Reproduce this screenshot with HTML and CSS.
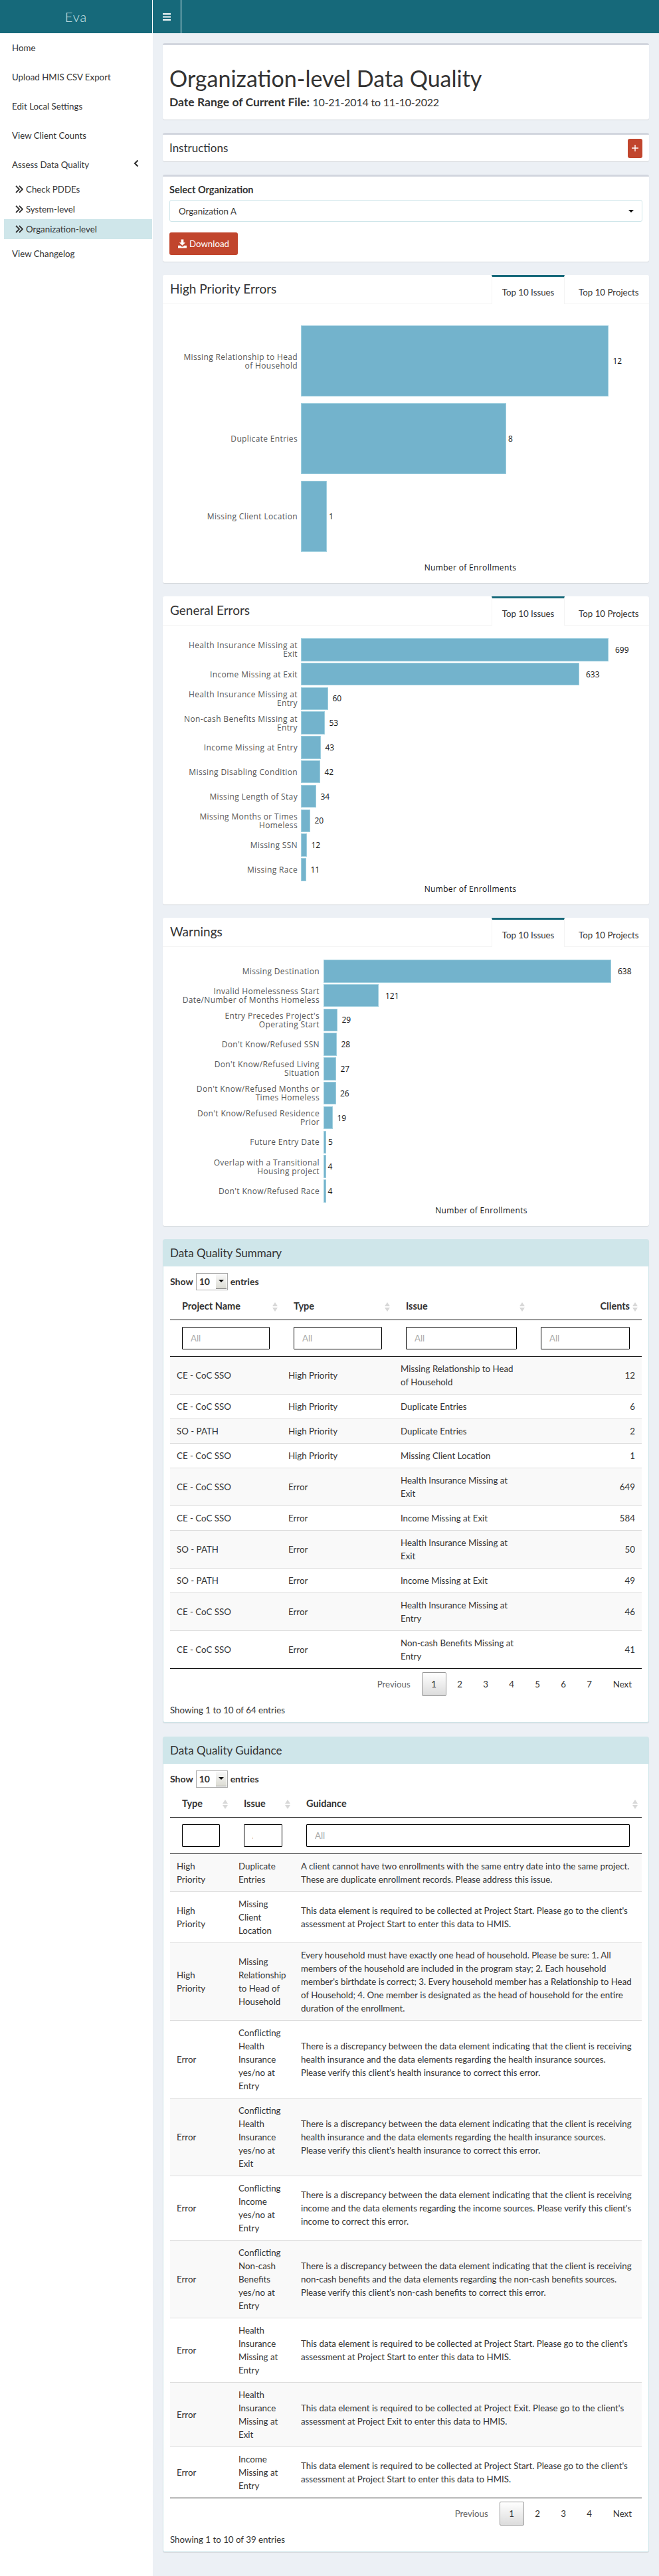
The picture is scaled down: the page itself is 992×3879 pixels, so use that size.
FILE: index.html
```html
<!DOCTYPE html>
<html lang="en">
<head>
  <meta charset="UTF-8" />
  <meta name="viewport" content="width=device-width, initial-scale=1.0" />
  <title>Eva</title>
  <link rel="stylesheet" href="styles.css">
</head>
<body>
  <header class="navbar">
    <div class="logo">Eva</div>
    <div class="toggle">
      <svg width="12" height="11" viewBox="0 0 12 11"><path d="M0 0h12v2H0zM0 4.500h12v2H0zM0 9h12v2H0z" fill="#fff"/></svg>
    </div>
  </header>

  <div class="wrapper">
    <nav class="sidebar">
      <ul class="menu">
        <li>Home</li>
        <li>Upload HMIS CSV Export</li>
        <li>Edit Local Settings</li>
        <li>View Client Counts</li>
        <li class="has-sub">Assess Data Quality
          <svg class="chev" width="8" height="12" viewBox="0 0 8 12"><path d="M6.500 1.500L2 6l4.500 4.500" fill="none" stroke="#333" stroke-width="2.200"/></svg>
        </li>
      </ul>
      <ul class="submenu">
        <li><svg width="12" height="12" viewBox="0 0 12 12"><path d="M1 1l5 5-5 5M6 1l5 5-5 5" fill="none" stroke="#333" stroke-width="1.800"/></svg>Check PDDEs</li>
        <li><svg width="12" height="12" viewBox="0 0 12 12"><path d="M1 1l5 5-5 5M6 1l5 5-5 5" fill="none" stroke="#333" stroke-width="1.800"/></svg>System-level</li>
        <li class="active"><svg width="12" height="12" viewBox="0 0 12 12"><path d="M1 1l5 5-5 5M6 1l5 5-5 5" fill="none" stroke="#333" stroke-width="1.800"/></svg>Organization-level</li>
      </ul>
      <ul class="menu">
        <li>View Changelog</li>
      </ul>
    </nav>

    <main class="content">
      <section class="box title-box">
        <h1>Organization-level Data Quality</h1>
        <h4><strong>Date Range of Current File:</strong> <span class="dates">10-21-2014 to 11-10-2022</span></h4>
      </section>

      <section class="box instructions">
        <h3>Instructions</h3>
        <button class="btn-plus">
          <svg width="10" height="10" viewBox="0 0 10 10"><path d="M5 0v10M0 5h10" stroke="#fff" stroke-width="1.400"/></svg>
        </button>
      </section>

      <section class="box org-box">
        <label class="org-label">Select Organization</label>
        <div class="org-select">Organization A<span class="caret"></span></div>
        <button class="btn-download">
          <svg width="14" height="14" viewBox="0 0 14 14"><path d="M5 0h4v5h3L7 10 2 5h3z" fill="#fff"/><path d="M0 10h4l2 2h2l2-2h4v4H0z" fill="#fff"/></svg>
          Download
        </button>
      </section>

      <section class="tab-box">
        <div class="tab-head">
          <h3>High Priority Errors</h3>
          <div class="tab active">Top 10 Issues</div>
          <div class="tab">Top 10 Projects</div>
        </div>
        <div class="chart tall">
          <div class="row"><div class="label">Missing Relationship to Head<br>of Household</div><div class="bar" style="width:463px"></div><div class="val d2">12</div></div>
          <div class="row"><div class="label">Duplicate Entries</div><div class="bar" style="width:309px"></div><div class="val d1">8</div></div>
          <div class="row"><div class="label">Missing Client Location</div><div class="bar" style="width:39px"></div><div class="val d1">1</div></div>
          <div class="axis-title">Number of Enrollments</div>
        </div>
      </section>

      <section class="tab-box">
        <div class="tab-head">
          <h3>General Errors</h3>
          <div class="tab active">Top 10 Issues</div>
          <div class="tab">Top 10 Projects</div>
        </div>
        <div class="chart">
          <div class="row"><div class="label">Health Insurance Missing at<br>Exit</div><div class="bar" style="width:463px"></div><div class="val d3">699</div></div>
          <div class="row"><div class="label">Income Missing at Exit</div><div class="bar" style="width:419px"></div><div class="val d3">633</div></div>
          <div class="row"><div class="label">Health Insurance Missing at<br>Entry</div><div class="bar" style="width:41px"></div><div class="val d2">60</div></div>
          <div class="row"><div class="label">Non-cash Benefits Missing at<br>Entry</div><div class="bar" style="width:36px"></div><div class="val d2">53</div></div>
          <div class="row"><div class="label">Income Missing at Entry</div><div class="bar" style="width:30px"></div><div class="val d2">43</div></div>
          <div class="row"><div class="label">Missing Disabling Condition</div><div class="bar" style="width:29px"></div><div class="val d2">42</div></div>
          <div class="row"><div class="label">Missing Length of Stay</div><div class="bar" style="width:23px"></div><div class="val d2">34</div></div>
          <div class="row"><div class="label">Missing Months or Times<br>Homeless</div><div class="bar" style="width:14px"></div><div class="val d2">20</div></div>
          <div class="row"><div class="label">Missing SSN</div><div class="bar" style="width:9px"></div><div class="val d2">12</div></div>
          <div class="row"><div class="label">Missing Race</div><div class="bar" style="width:8px"></div><div class="val d2">11</div></div>
          <div class="axis-title">Number of Enrollments</div>
        </div>
      </section>

      <section class="tab-box">
        <div class="tab-head">
          <h3>Warnings</h3>
          <div class="tab active">Top 10 Issues</div>
          <div class="tab">Top 10 Projects</div>
        </div>
        <div class="chart wide">
          <div class="row"><div class="label">Missing Destination</div><div class="bar" style="width:433px"></div><div class="val d3">638</div></div>
          <div class="row"><div class="label">Invalid Homelessness Start<br>Date/Number of Months Homeless</div><div class="bar" style="width:83px"></div><div class="val d3">121</div></div>
          <div class="row"><div class="label">Entry Precedes Project's<br>Operating Start</div><div class="bar" style="width:21px"></div><div class="val d2">29</div></div>
          <div class="row"><div class="label">Don't Know/Refused SSN</div><div class="bar" style="width:20px"></div><div class="val d2">28</div></div>
          <div class="row"><div class="label">Don't Know/Refused Living<br>Situation</div><div class="bar" style="width:19px"></div><div class="val d2">27</div></div>
          <div class="row"><div class="label">Don't Know/Refused Months or<br>Times Homeless</div><div class="bar" style="width:18.500px"></div><div class="val d2">26</div></div>
          <div class="row"><div class="label">Don't Know/Refused Residence<br>Prior</div><div class="bar" style="width:14px"></div><div class="val d2">19</div></div>
          <div class="row"><div class="label">Future Entry Date</div><div class="bar" style="width:4px"></div><div class="val d1">5</div></div>
          <div class="row"><div class="label">Overlap with a Transitional<br>Housing project</div><div class="bar" style="width:3.500px"></div><div class="val d1">4</div></div>
          <div class="row"><div class="label">Don't Know/Refused Race</div><div class="bar" style="width:3.500px"></div><div class="val d1">4</div></div>
          <div class="axis-title">Number of Enrollments</div>
        </div>
      </section>

      <section class="solid-box">
        <h3 class="solid-head">Data Quality Summary</h3>
        <div class="solid-body">
          <div class="length">Show <span class="len-select">10<span class="len-btn"></span></span> entries</div>
          <table class="dt summary">
            <thead>
              <tr>
                <th class="c-project">Project Name<span class="sort"></span></th>
                <th class="c-type">Type<span class="sort"></span></th>
                <th class="c-issue">Issue<span class="sort"></span></th>
                <th class="c-clients num">Clients<span class="sort"></span></th>
              </tr>
              <tr class="filters">
                <td><input placeholder="All"></td>
                <td><input placeholder="All"></td>
                <td><input placeholder="All"></td>
                <td><input placeholder="All"></td>
              </tr>
            </thead>
            <tbody>
              <tr><td>CE - CoC SSO</td><td>High Priority</td><td>Missing Relationship to Head<br>of Household</td><td class="num">12</td></tr>
              <tr><td>CE - CoC SSO</td><td>High Priority</td><td>Duplicate Entries</td><td class="num">6</td></tr>
              <tr><td>SO - PATH</td><td>High Priority</td><td>Duplicate Entries</td><td class="num">2</td></tr>
              <tr><td>CE - CoC SSO</td><td>High Priority</td><td>Missing Client Location</td><td class="num">1</td></tr>
              <tr><td>CE - CoC SSO</td><td>Error</td><td>Health Insurance Missing at<br>Exit</td><td class="num">649</td></tr>
              <tr><td>CE - CoC SSO</td><td>Error</td><td>Income Missing at Exit</td><td class="num">584</td></tr>
              <tr><td>SO - PATH</td><td>Error</td><td>Health Insurance Missing at<br>Exit</td><td class="num">50</td></tr>
              <tr><td>SO - PATH</td><td>Error</td><td>Income Missing at Exit</td><td class="num">49</td></tr>
              <tr><td>CE - CoC SSO</td><td>Error</td><td>Health Insurance Missing at<br>Entry</td><td class="num">46</td></tr>
              <tr><td>CE - CoC SSO</td><td>Error</td><td>Non-cash Benefits Missing at<br>Entry</td><td class="num">41</td></tr>
            </tbody>
          </table>
          <div class="pager">
            <span class="page off">Previous</span>
            <span class="page digit current">1</span>
            <span class="page digit">2</span>
            <span class="page digit">3</span>
            <span class="page digit">4</span>
            <span class="page digit">5</span>
            <span class="page digit">6</span>
            <span class="page digit">7</span>
            <span class="page">Next</span>
          </div>
          <div class="info">Showing 1 to 10 of 64 entries</div>
        </div>
      </section>

      <section class="solid-box">
        <h3 class="solid-head">Data Quality Guidance</h3>
        <div class="solid-body">
          <div class="length">Show <span class="len-select">10<span class="len-btn"></span></span> entries</div>
          <table class="dt guidance">
            <thead>
              <tr>
                <th class="g-type">Type<span class="sort"></span></th>
                <th class="g-issue">Issue<span class="sort"></span></th>
                <th class="g-text">Guidance<span class="sort"></span></th>
              </tr>
              <tr class="filters">
                <td><input class="clipped" placeholder="All"></td>
                <td><input class="clipped" placeholder="All"></td>
                <td><input placeholder="All"></td>
              </tr>
            </thead>
            <tbody>
              <tr><td>High<br>Priority</td><td>Duplicate<br>Entries</td><td>A client cannot have two enrollments with the same entry date into the same project.<br>These are duplicate enrollment records. Please address this issue.</td></tr>
              <tr><td>High<br>Priority</td><td>Missing<br>Client<br>Location</td><td>This data element is required to be collected at Project Start. Please go to the client's<br>assessment at Project Start to enter this data to HMIS.</td></tr>
              <tr><td>High<br>Priority</td><td>Missing<br>Relationship<br>to Head of<br>Household</td><td>Every household must have exactly one head of household. Please be sure: 1. All<br>members of the household are included in the program stay; 2. Each household<br>member's birthdate is correct; 3. Every household member has a Relationship to Head<br>of Household; 4. One member is designated as the head of household for the entire<br>duration of the enrollment.</td></tr>
              <tr><td>Error</td><td>Conflicting<br>Health<br>Insurance<br>yes/no at<br>Entry</td><td>There is a discrepancy between the data element indicating that the client is receiving<br>health insurance and the data elements regarding the health insurance sources.<br>Please verify this client's health insurance to correct this error.</td></tr>
              <tr><td>Error</td><td>Conflicting<br>Health<br>Insurance<br>yes/no at<br>Exit</td><td>There is a discrepancy between the data element indicating that the client is receiving<br>health insurance and the data elements regarding the health insurance sources.<br>Please verify this client's health insurance to correct this error.</td></tr>
              <tr><td>Error</td><td>Conflicting<br>Income<br>yes/no at<br>Entry</td><td>There is a discrepancy between the data element indicating that the client is receiving<br>income and the data elements regarding the income sources. Please verify this client's<br>income to correct this error.</td></tr>
              <tr><td>Error</td><td>Conflicting<br>Non-cash<br>Benefits<br>yes/no at<br>Entry</td><td>There is a discrepancy between the data element indicating that the client is receiving<br>non-cash benefits and the data elements regarding the non-cash benefits sources.<br>Please verify this client's non-cash benefits to correct this error.</td></tr>
              <tr><td>Error</td><td>Health<br>Insurance<br>Missing at<br>Entry</td><td>This data element is required to be collected at Project Start. Please go to the client's<br>assessment at Project Start to enter this data to HMIS.</td></tr>
              <tr><td>Error</td><td>Health<br>Insurance<br>Missing at<br>Exit</td><td>This data element is required to be collected at Project Exit. Please go to the client's<br>assessment at Project Exit to enter this data to HMIS.</td></tr>
              <tr><td>Error</td><td>Income<br>Missing at<br>Entry</td><td>This data element is required to be collected at Project Start. Please go to the client's<br>assessment at Project Start to enter this data to HMIS.</td></tr>
            </tbody>
          </table>
          <div class="pager">
            <span class="page off">Previous</span>
            <span class="page digit current">1</span>
            <span class="page digit">2</span>
            <span class="page digit">3</span>
            <span class="page digit">4</span>
            <span class="page">Next</span>
          </div>
          <div class="info">Showing 1 to 10 of 39 entries</div>
        </div>
      </section>
    </main>
  </div>
</body>
</html>
```

FILE: styles.css
```css
* {
  box-sizing: border-box;
}
body {
  margin: 0;
  font-family: "Lato", "Noto Sans", sans-serif;
  font-size: 13.300px;
  line-height: 20px;
  color: #333;
  background: #ecf0f5;
}
h1, h3, h4 {
  margin: 0;
  font-weight: 400;
}

/* Top bar */
.navbar {
  display: flex;
  height: 50px;
  background: #16697a;
}
.logo {
  width: 230px;
  border-right: 1px solid #fff;
  text-align: center;
  font-size: 20px;
  font-weight: 300;
  line-height: 50px;
  letter-spacing: 1px;
  color: #cfe6ea;
}
.toggle {
  display: flex;
  align-items: center;
  justify-content: center;
  width: 43px;
  border-right: 1px solid #fff;
}

/* Sidebar */
.wrapper {
  display: flex;
  min-height: 3829px;
}
.sidebar {
  flex: none;
  width: 230px;
  background: #fff;
}
.menu, .submenu {
  list-style: none;
  margin: 0;
  padding: 0;
}
.menu li {
  position: relative;
  padding: 12px 15px 12px 18px;
}
.chev {
  position: absolute;
  right: 21px;
  top: 14px;
}
.submenu {
  padding: 0 1px 0 6px;
}
.submenu li {
  display: flex;
  align-items: center;
  gap: 4px;
  height: 30px;
  padding-left: 17px;
}
.submenu li.active {
  background: #cfe6ea;
}

/* Content */
.content {
  flex: 1;
  min-width: 0;
  padding: 15px;
}
.box, .tab-box, .solid-box {
  margin-bottom: 20px;
  background: #fff;
  border-radius: 3px;
  box-shadow: 0 1px 1px rgba(0, 0, 0, 0.1);
}
.box {
  border-top: 3px solid #d2d6de;
}
.title-box {
  height: 115px;
  padding: 30px 10px 0;
}
.title-box h1 {
  font-size: 34px;
  line-height: 40px;
}
.title-box h4 {
  margin-top: 6px;
  font-size: 17.500px;
  line-height: 20px;
}
.dates {
  font-size: 16px;
  letter-spacing: -0.2px;
}
.instructions {
  display: flex;
  align-items: center;
  justify-content: space-between;
  height: 43px;
  padding: 0 10px;
}
.instructions h3 {
  font-size: 17px;
}
.btn-plus {
  display: flex;
  align-items: center;
  justify-content: center;
  width: 22px;
  height: 29px;
  padding: 0;
  border: 0;
  border-radius: 3px;
  background: #c1452d;
}
.org-box {
  height: 131px;
  padding: 10px;
}
.org-label {
  display: block;
  font-size: 14.500px;
  font-weight: 700;
}
.org-select {
  display: flex;
  align-items: center;
  justify-content: space-between;
  height: 33px;
  margin-top: 5px;
  padding: 0 12px 0 13px;
  border: 1px solid #cfe6ea;
  border-radius: 3px;
}
.caret {
  width: 0;
  height: 0;
  border-left: 4px solid transparent;
  border-right: 4px solid transparent;
  border-top: 4px solid #111;
}
.btn-download {
  display: flex;
  align-items: center;
  gap: 4px;
  width: 103px;
  height: 34px;
  margin-top: 16px;
  padding: 0 13px;
  border: 0;
  border-radius: 3px;
  background: #c1452d;
  color: #fff;
  font: inherit;
}

/* Tabbed chart boxes */
.tab-head {
  display: flex;
  height: 44px;
  border-bottom: 1px solid #f4f4f4;
}
.tab-head h3 {
  flex: 1;
  padding: 9px 11px 0;
  font-size: 19px;
  line-height: 24px;
}
.tab {
  flex: none;
  width: 127px;
  height: 44px;
  padding: 13px 0 0 21px;
  border-top: 3px solid transparent;
  white-space: nowrap;
}
.tab.active {
  width: 110px;
  padding: 13px 0 0;
  text-align: center;
  border-top-color: #16697a;
  border-left: 1px solid #f4f4f4;
  border-right: 1px solid #f4f4f4;
  background: #fff;
}
.chart {
  --label: 203px;
  display: flex;
  flex-direction: column;
  gap: 2.300px;
  height: 420px;
  padding-top: 19px;
  font-family: "Open Sans", sans-serif;
  font-size: 12px;
  line-height: 13px;
}
.chart.wide {
  --label: 236px;
}
.chart.tall {
  gap: 10px;
  padding-top: 32px;
}
.row {
  display: flex;
  align-items: center;
  height: 34.500px;
}
.tall .row {
  height: 107px;
}
.label {
  flex: none;
  width: var(--label);
  margin-right: 5px;
  text-align: right;
  letter-spacing: 0.35px;
  color: #555;
}
.wide .label {
  margin-right: 6px;
}
.bar {
  height: 100%;
  background: #73b3cc;
  border: 1px solid #9fcfdf;
}
.val {
  color: #111;
}
.val.d1 { margin-left: 3px; }
.val.d2 { margin-left: 6.500px; }
.val.d3 { margin-left: 10px; }
.axis-title {
  margin: 2px 14px 0 calc(var(--label) + 5px);
  text-align: center;
  line-height: 16px;
  letter-spacing: 0.35px;
  color: #111;
}
.tall .axis-title {
  margin-top: 6px;
}

/* Solid table boxes */
.solid-box {
  border: 1px solid #cfe6ea;
  margin-bottom: 21px;
}
.solid-head {
  height: 40px;
  padding: 9px 10px 0;
  font-size: 17px;
  line-height: 22px;
  background: #cfe6ea;
}
.solid-body {
  padding: 10px 10px 8px;
}
.length {
  display: flex;
  align-items: center;
  gap: 4px;
  height: 26px;
  font-size: 14px;
  font-weight: 700;
}
.len-select {
  display: flex;
  align-items: center;
  justify-content: space-between;
  width: 48px;
  height: 26px;
  padding: 0 1px 0 4px;
  border: 1px solid #aaa;
  font-weight: 700;
}
.len-btn {
  position: relative;
  width: 16px;
  height: 22px;
  background: linear-gradient(#f8f8f8, #dcdcd4);
  border-bottom: 1px solid #888;
}
.len-btn::after {
  content: "";
  position: absolute;
  left: 4px;
  top: 8px;
  border-left: 4px solid transparent;
  border-right: 4px solid transparent;
  border-top: 4px solid #111;
}
.dt {
  width: 100%;
  margin-top: 4px;
  table-layout: fixed;
  border-collapse: separate;
  border-spacing: 0;
}
.dt th {
  position: relative;
  padding: 10px 18px;
  text-align: left;
  font-size: 14.500px;
  font-weight: 700;
  border-bottom: 1px solid #111;
}
.dt th.num {
  text-align: right;
}
.sort {
  position: absolute;
  right: 5px;
  top: 14px;
  width: 9px;
  height: 14px;
}
.sort::before, .sort::after {
  content: "";
  position: absolute;
  left: 0;
  border-left: 4.500px solid transparent;
  border-right: 4.500px solid transparent;
}
.sort::before {
  top: 0;
  border-bottom: 6px solid #d8d8d8;
}
.sort::after {
  bottom: 0;
  border-top: 6px solid #d8d8d8;
}
.filters td {
  padding: 10px 18px;
  border-bottom: 1px solid #111;
}
.filters input {
  display: block;
  width: 100%;
  height: 34px;
  padding: 0 12px;
  border: 1px solid #000;
  border-radius: 1px;
  font: inherit;
}
.filters input::placeholder {
  color: #aaa;
}
.filters input.clipped {
  padding-right: 43px;
}
.c-project { width: 168px; }
.c-type { width: 169px; }
.c-issue { width: 203px; }
.c-clients { width: 170px; }
.g-type { width: 93px; }
.g-issue { width: 94px; }
.dt tbody td {
  padding: 8px 10px;
  white-space: nowrap;
  border-bottom: 1px solid #ddd;
}
.dt tbody td.num {
  text-align: right;
}
.dt tbody tr:nth-child(odd) {
  background: #f9f9f9;
}
.dt tbody tr:last-child td {
  border-bottom: 1px solid #111;
}
.pager {
  display: flex;
  justify-content: flex-end;
  gap: 2px;
  margin-top: 5px;
}
.page {
  padding: 7px 14px;
  border: 1px solid transparent;
  border-radius: 2px;
}
.page.digit {
  width: 37px;
  padding: 7px 0;
  text-align: center;
}
.page.off {
  color: #666;
}
.page.current {
  border-color: #979797;
  background: linear-gradient(#fff, #dcdcdc);
}
.info {
  padding-top: 11px;
}
```
